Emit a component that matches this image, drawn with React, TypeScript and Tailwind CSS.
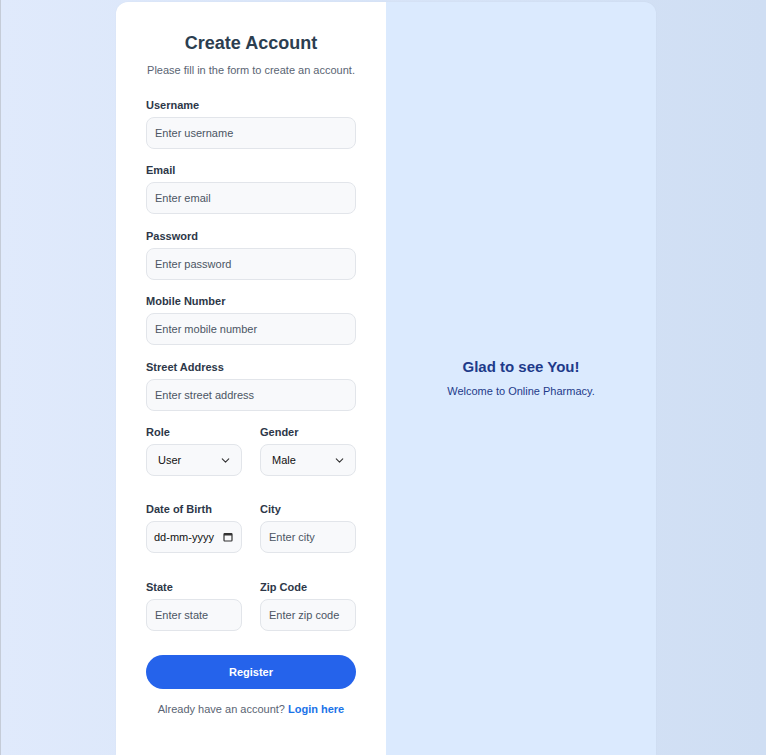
import { ChevronDown } from "lucide-react";

const font = "font-['Liberation_Sans',Arial,sans-serif]";

function Field({ label, placeholder }: { label: string; placeholder: string }) {
  return (
    <div className="mb-[13.5px]">
      <label className="block text-[11px] leading-4 font-bold text-[#2d3748] mb-1">{label}</label>
      <input
        type="text"
        placeholder={placeholder}
        className="w-full h-8 px-2 text-[11px] rounded-lg border border-[#e2e5ea] bg-[#f8f9fb] text-[#333] placeholder:text-[#4b5563] outline-none"
      />
    </div>
  );
}

function SelectField({ label, value }: { label: string; value: string }) {
  return (
    <div>
      <label className="block text-[11px] leading-4 font-bold text-[#2d3748] mb-1">{label}</label>
      <div className="h-8 pl-[11px] pr-[9px] rounded-lg border border-[#e2e5ea] bg-[#f8f9fb] flex items-center justify-between text-[11px] text-[#111]">
        <span>{value}</span>
        <ChevronDown size={13} strokeWidth={2} className="text-[#333]" />
      </div>
    </div>
  );
}

function SmallField({ label, placeholder }: { label: string; placeholder: string }) {
  return (
    <div>
      <label className="block text-[11px] leading-4 font-bold text-[#2d3748] mb-1">{label}</label>
      <input
        type="text"
        placeholder={placeholder}
        className="w-full h-8 px-2 text-[11px] rounded-lg border border-[#e2e5ea] bg-[#f8f9fb] text-[#333] placeholder:text-[#4b5563] outline-none"
      />
    </div>
  );
}

export default function App() {
  return (
    <div className={`${font} min-h-screen border-l border-[#c5ccd8] bg-gradient-to-r from-[#e0eafc] to-[#cfdef3] flex pl-[115px] pt-[2px]`}>
      <div className="w-[540px] h-[753px] rounded-t-xl overflow-hidden grid grid-cols-2 shadow-[0_0_2px_rgba(0,0,0,0.04)]">
        {/* Formulaire */}
        <div className="bg-white px-[30px] pt-[29px]">
          <h1 className="text-center text-[18px] leading-6 font-bold text-[#2c3e50]">Create Account</h1>
          <p className="text-center text-[11px] text-[#5a6473] mt-[7px] mb-[18px]">
            Please fill in the form to create an account.
          </p>

          <Field label="Username" placeholder="Enter username" />
          <Field label="Email" placeholder="Enter email" />
          <Field label="Password" placeholder="Enter password" />
          <Field label="Mobile Number" placeholder="Enter mobile number" />
          <Field label="Street Address" placeholder="Enter street address" />

          <div className="grid grid-cols-2 gap-[18px] mt-px">
            <SelectField label="Role" value="User" />
            <SelectField label="Gender" value="Male" />
          </div>

          <div className="grid grid-cols-2 gap-[18px] mt-[25px]">
            <div>
              <label className="block text-[11px] leading-4 font-bold text-[#2d3748] mb-1">Date of Birth</label>
              <div className="h-8 pl-[7px] pr-[8px] rounded-lg border border-[#e2e5ea] bg-[#f8f9fb] flex items-center justify-between text-[11px] text-[#111]">
                <span>dd-mm-yyyy</span>
                <svg width="10" height="10" viewBox="0 0 10 10">
                  <rect x="1" y="1.5" width="8" height="7.5" rx="0.8" fill="none" stroke="#333" strokeWidth="1.2" />
                  <rect x="1" y="1.5" width="8" height="2" fill="#333" />
                </svg>
              </div>
            </div>
            <SmallField label="City" placeholder="Enter city" />
          </div>

          <div className="grid grid-cols-2 gap-[18px] mt-[26px]">
            <SmallField label="State" placeholder="Enter state" />
            <SmallField label="Zip Code" placeholder="Enter zip code" />
          </div>

          <button className="w-full h-[34px] mt-6 rounded-full bg-[#2563eb] text-white text-[11px] font-bold">
            Register
          </button>

          <p className="text-center text-[11px] text-[#5a6473] mt-3">
            Already have an account?{" "}
            <a href="#" className="text-[#1a73e8] font-bold">
              Login here
            </a>
          </p>
        </div>

        {/* Panneau d'accueil */}
        <div className="bg-[#dbeafe] flex flex-col items-center justify-center text-[#1e3a8a]">
          <h2 className="text-[15px] font-bold leading-5">Glad to see You!</h2>
          <p className="text-[11px] mt-[6px] text-[#1e3a8a]">Welcome to Online Pharmacy.</p>
        </div>
      </div>
    </div>
  );
}
